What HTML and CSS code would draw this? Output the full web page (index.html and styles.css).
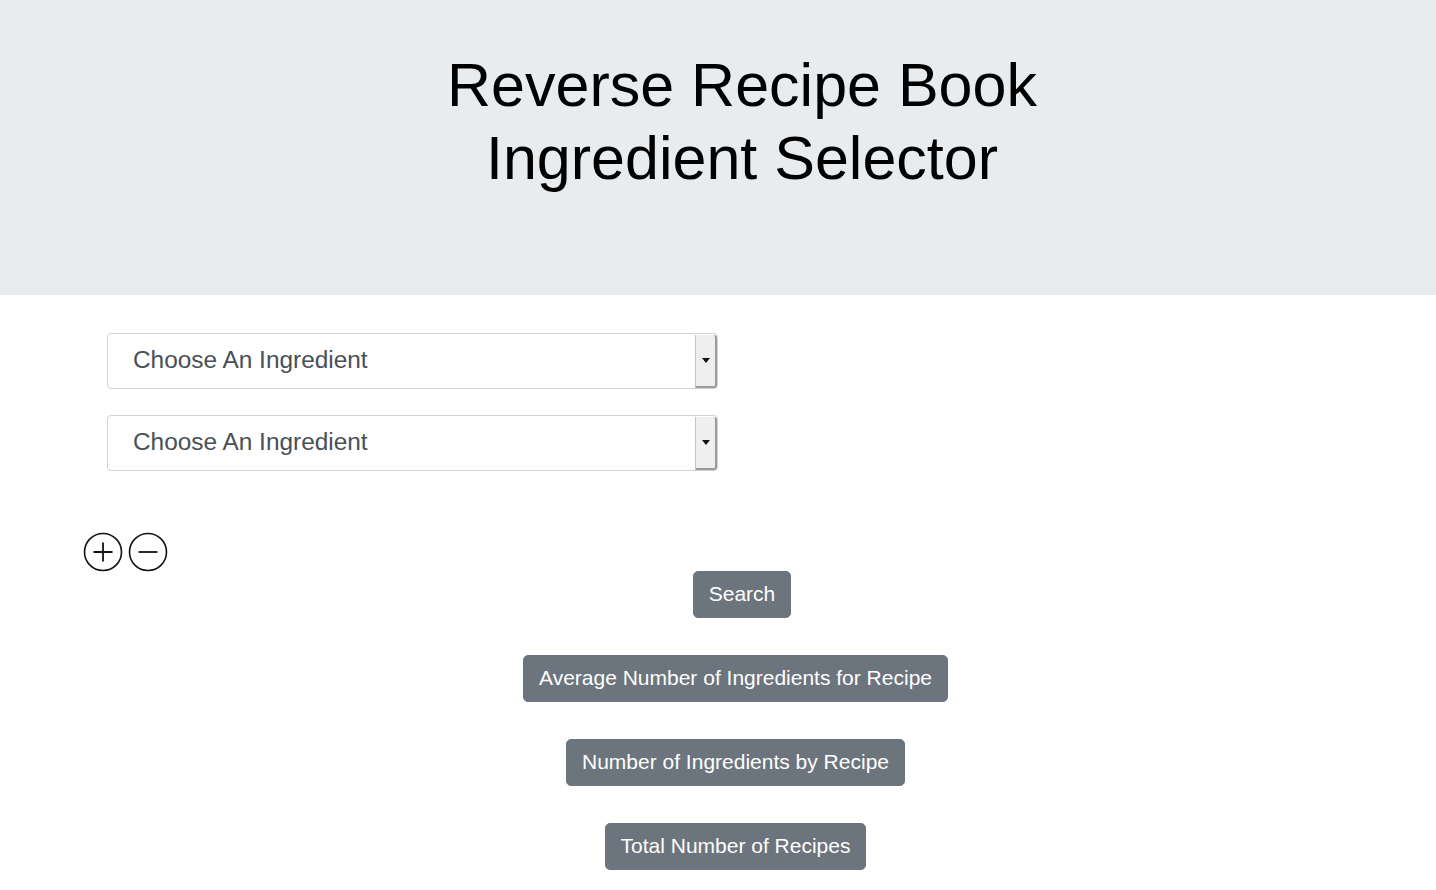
FILE: index.html
```html
<!DOCTYPE html>
<html>
<head>
<meta charset="utf-8">
<link rel="stylesheet" href="styles.css">
</head>
<body>
<header class="jumbotron">
  <h1 class="title">Reverse Recipe Book<br>Ingredient Selector</h1>
</header>
<main class="content">
  <div class="selects">
    <div class="select">
      <span class="select-text">Choose An Ingredient</span>
      <span class="select-arrow"><span class="tri"></span></span>
    </div>
    <div class="select">
      <span class="select-text">Choose An Ingredient</span>
      <span class="select-arrow"><span class="tri"></span></span>
    </div>
  </div>
  <div class="icons">
    <svg class="icon" width="40" height="40" viewBox="0 0 40 40">
      <circle cx="20" cy="20" r="18.5" fill="none" stroke="#111" stroke-width="1.6"/>
      <path d="M20 10.5V29.5M10.5 20H29.5" stroke="#111" stroke-width="1.8"/>
    </svg>
    <svg class="icon" width="40" height="40" viewBox="0 0 40 40">
      <circle cx="20" cy="20" r="18.5" fill="none" stroke="#111" stroke-width="1.6"/>
      <path d="M10.5 20H29.5" stroke="#111" stroke-width="1.8"/>
    </svg>
  </div>
  <div class="search-row">
    <button class="btn">Search</button>
  </div>
  <div class="stats">
    <button class="btn">Average Number of Ingredients for Recipe</button>
    <button class="btn">Number of Ingredients by Recipe</button>
    <button class="btn">Total Number of Recipes</button>
  </div>
</main>
</body>
</html>
```
FILE: styles.css
```css
* { box-sizing: border-box; }
html, body { margin: 0; padding: 0; background: #fff; }
body { font-family: "Liberation Sans", Arial, sans-serif; color: #212529; }

.jumbotron {
  background: #e9ecef;
  height: 295px;
  padding-top: 49px;
  padding-left: 48px;
}
.title {
  margin: 0;
  text-align: center;
  font-weight: 400;
  font-size: 61px;
  line-height: 73px;
  color: #000;
}

.content { padding-top: 38px; }

.selects {
  display: flex;
  flex-direction: column;
  gap: 26px;
  padding-left: 107px;
}
.select {
  width: 611px;
  height: 56px;
  border: 1px solid #ced4da;
  border-radius: 4px;
  display: flex;
  align-items: stretch;
  background: #fff;
}
.select-text {
  flex: 1;
  display: flex;
  align-items: center;
  padding-left: 25px;
  padding-bottom: 2px;
  font-size: 24.4px;
  color: #495057;
}
.select-arrow {
  width: 22px;
  margin: 1px 0 0 0;
  background: #efefef;
  border-left: 1px solid #c4c4c4;
  border-right: 2px solid #9a9a9a;
  border-bottom: 2px solid #9a9a9a;
  border-radius: 0 3px 3px 0;
  display: flex;
  align-items: center;
  justify-content: center;
}
.tri {
  width: 0; height: 0;
  border-left: 4px solid transparent;
  border-right: 4px solid transparent;
  border-top: 5px solid #111;
}

.icons {
  display: flex;
  gap: 5px;
  padding-left: 83px;
  margin-top: 62px;
  height: 38px;
  align-items: center;
}
.icon { display: block; }

.search-row {
  display: flex;
  justify-content: center;
  padding-left: 48px;
}
.btn {
  font-family: "Liberation Sans", Arial, sans-serif;
  font-size: 21px;
  line-height: 31px;
  padding: 6px 15px 10px;
  height: 47px;
  color: #fff;
  background: #6c757d;
  border: 1px solid #6c757d;
  border-radius: 5px;
}
.stats {
  display: flex;
  flex-direction: column;
  align-items: center;
  gap: 37px;
  margin-top: 37px;
  padding-left: 35px;
}
```
